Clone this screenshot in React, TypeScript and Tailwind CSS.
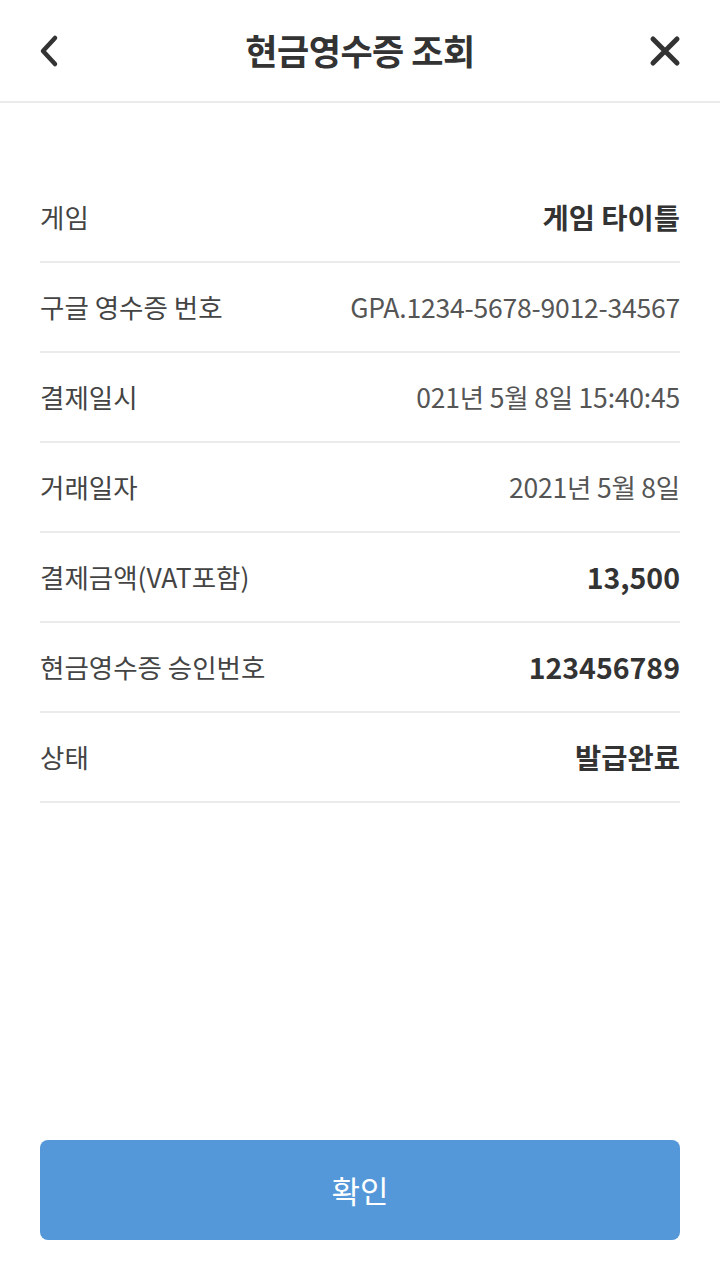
const rows = [
  { label: "게임", value: "게임 타이틀", bold: true },
  { label: "구글 영수증 번호", value: "GPA.1234-5678-9012-34567", bold: false },
  { label: "결제일시", value: "021년 5월 8일 15:40:45", bold: false },
  { label: "거래일자", value: "2021년 5월 8일", bold: false },
  { label: "결제금액(VAT포함)", value: "13,500", bold: true },
  { label: "현금영수증 승인번호", value: "123456789", bold: true },
  { label: "상태", value: "발급완료", bold: true },
];

export default function App() {
  return (
    <div
      className="w-[720px] h-[1280px] bg-white flex flex-col"
      style={{ fontFamily: '"Noto Sans CJK KR", "Noto Sans", sans-serif' }}
    >
      {/* Header */}
      <header className="h-[103px] shrink-0 flex items-center justify-between px-[38px] border-b-2 border-[#ebebeb]">
        <button className="w-[34px] h-[34px] flex items-center">
          <svg width="24" height="34" viewBox="0 0 24 34" fill="none">
            <path
              d="M17 4 L5 17 L17 30"
              stroke="#333"
              strokeWidth="4.5"
              strokeLinecap="round"
              strokeLinejoin="round"
            />
          </svg>
        </button>
        <h1 className="text-[35px] font-bold text-[#333] tracking-[-0.5px]">현금영수증 조회</h1>
        <button className="w-[34px] h-[34px] flex items-center justify-center">
          <svg width="34" height="34" viewBox="0 0 34 34" fill="none">
            <path
              d="M5 5 L29 29 M29 5 L5 29"
              stroke="#333"
              strokeWidth="5"
              strokeLinecap="round"
            />
          </svg>
        </button>
      </header>

      {/* Rows */}
      <main className="flex-1 px-[40px] pt-[70px]">
        {rows.map((r) => (
          <div
            key={r.label}
            className="h-[90px] flex items-center justify-between border-b-2 border-[#ebebeb]"
          >
            <span className="text-[26.5px] text-[#444]">{r.label}</span>
            <span
              className={
                r.bold
                  ? "text-[28.5px] font-bold text-[#333]"
                  : "text-[26.5px] text-[#555] tracking-[-0.2px]"
              }
            >
              {r.value}
            </span>
          </div>
        ))}
      </main>

      {/* Footer button */}
      <div className="px-[40px] pb-[40px]">
        <button className="w-full h-[100px] rounded-[8px] bg-[#5498d9] text-white text-[31px]">
          확인
        </button>
      </div>
    </div>
  );
}
